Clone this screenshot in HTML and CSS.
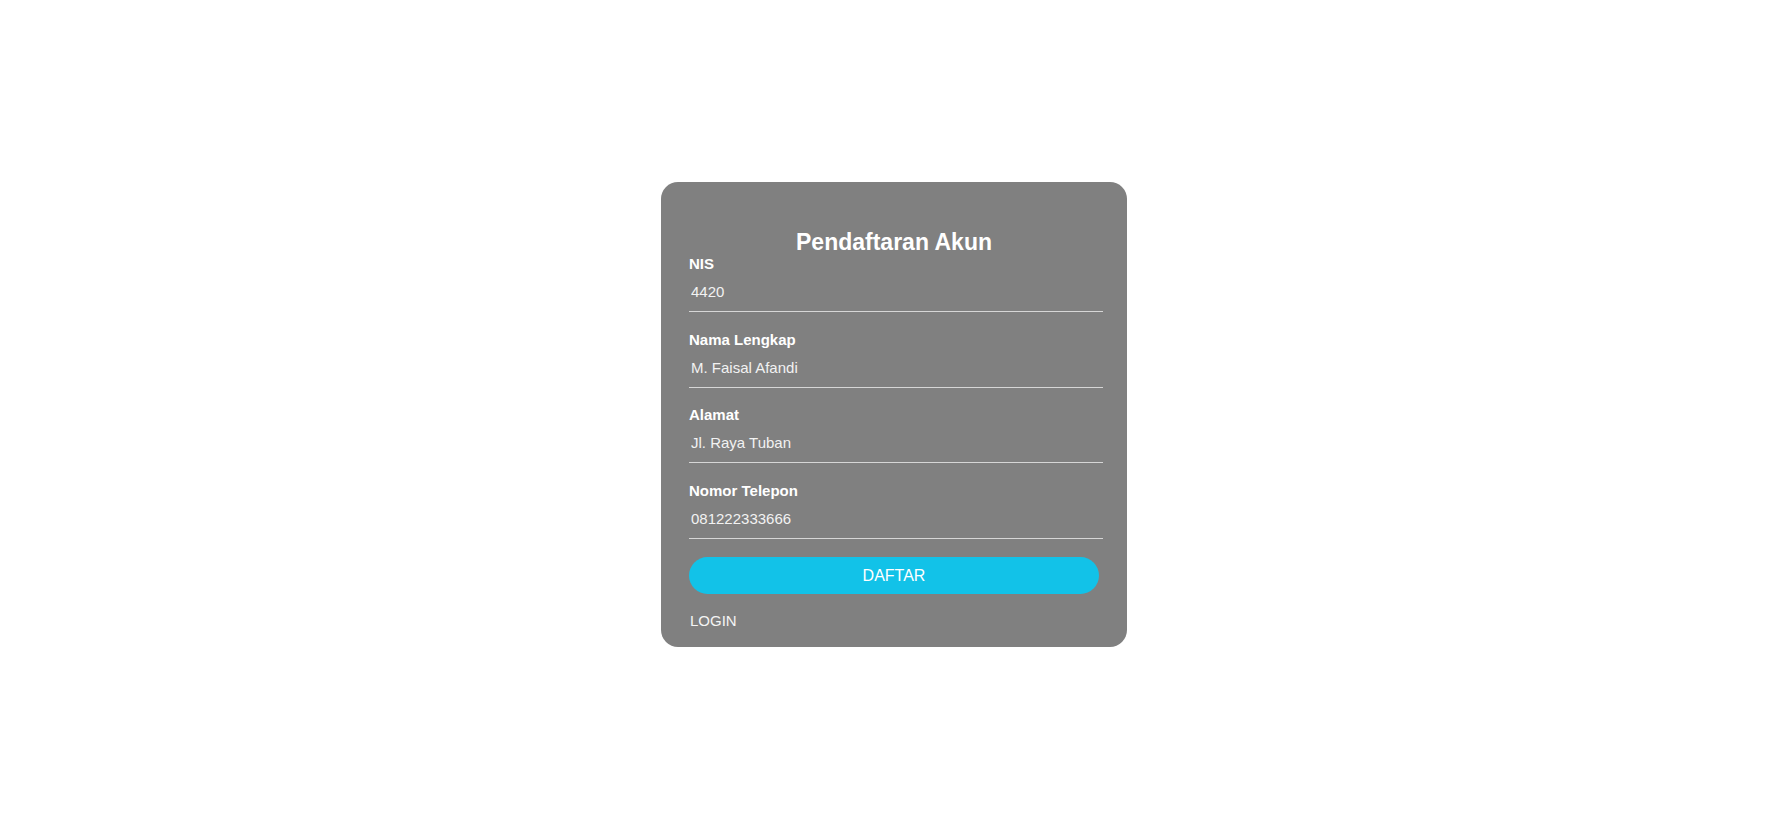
FILE: index.html
```html
<!DOCTYPE html>
<html lang="id">
<head>
<meta charset="utf-8">
<title>Pendaftaran Akun</title>
<link rel="stylesheet" href="styles.css">
</head>
<body>
<main class="page">
  <form class="card">
    <h2 class="card-title">Pendaftaran Akun</h2>
    <div class="field">
      <label class="field-label" for="nis">NIS</label>
      <input class="field-input" id="nis" type="text" value="4420">
    </div>
    <div class="field">
      <label class="field-label" for="nama">Nama Lengkap</label>
      <input class="field-input" id="nama" type="text" value="M. Faisal Afandi">
    </div>
    <div class="field">
      <label class="field-label" for="alamat">Alamat</label>
      <input class="field-input" id="alamat" type="text" value="Jl. Raya Tuban">
    </div>
    <div class="field">
      <label class="field-label" for="telp">Nomor Telepon</label>
      <input class="field-input" id="telp" type="text" value="081222333666">
    </div>
    <button class="btn-submit" type="button">DAFTAR</button>
    <a class="link-login" href="#">LOGIN</a>
  </form>
</main>
</body>
</html>
```
FILE: styles.css
```css
* {
  box-sizing: border-box;
}

html, body {
  margin: 0;
  padding: 0;
  background: #ffffff;
}

body {
  font-family: "Liberation Sans", Arial, sans-serif;
}

.page {
  height: 100vh;
  padding-top: 2px;
  display: flex;
  align-items: center;
  justify-content: center;
}

.card {
  width: 466px;
  background: #808080;
  border-radius: 17px;
  padding: 47px 28px 18px;
  display: flex;
  flex-direction: column;
  color: #ffffff;
}

.card-title {
  margin: 0;
  font-size: 23px;
  line-height: 26px;
  font-weight: bold;
  text-align: center;
  color: #ffffff;
}

.field {
  display: flex;
  flex-direction: column;
  margin-bottom: 18.5px;
}

.field-label {
  font-size: 15px;
  line-height: 17px;
  font-weight: bold;
  color: #ffffff;
}

.field-input {
  box-sizing: content-box;
  width: 100%;
  height: 39px;
  padding: 0 2px;
  margin: 0;
  border: none;
  border-bottom: 1px solid #d6d6d6;
  background: transparent;
  font-family: "Liberation Sans", Arial, sans-serif;
  font-size: 15px;
  color: #f2f2f2;
  outline: none;
}

.btn-submit {
  height: 37px;
  width: 100%;
  border: none;
  border-radius: 19px;
  background: #12c2e8;
  color: #ffffff;
  font-family: "Liberation Sans", Arial, sans-serif;
  font-size: 16px;
  padding: 0;
  cursor: pointer;
}

.link-login {
  margin-top: 18px;
  font-size: 15px;
  line-height: 17px;
  color: #f4f4f4;
  text-decoration: none;
  padding-left: 1px;
}
```
